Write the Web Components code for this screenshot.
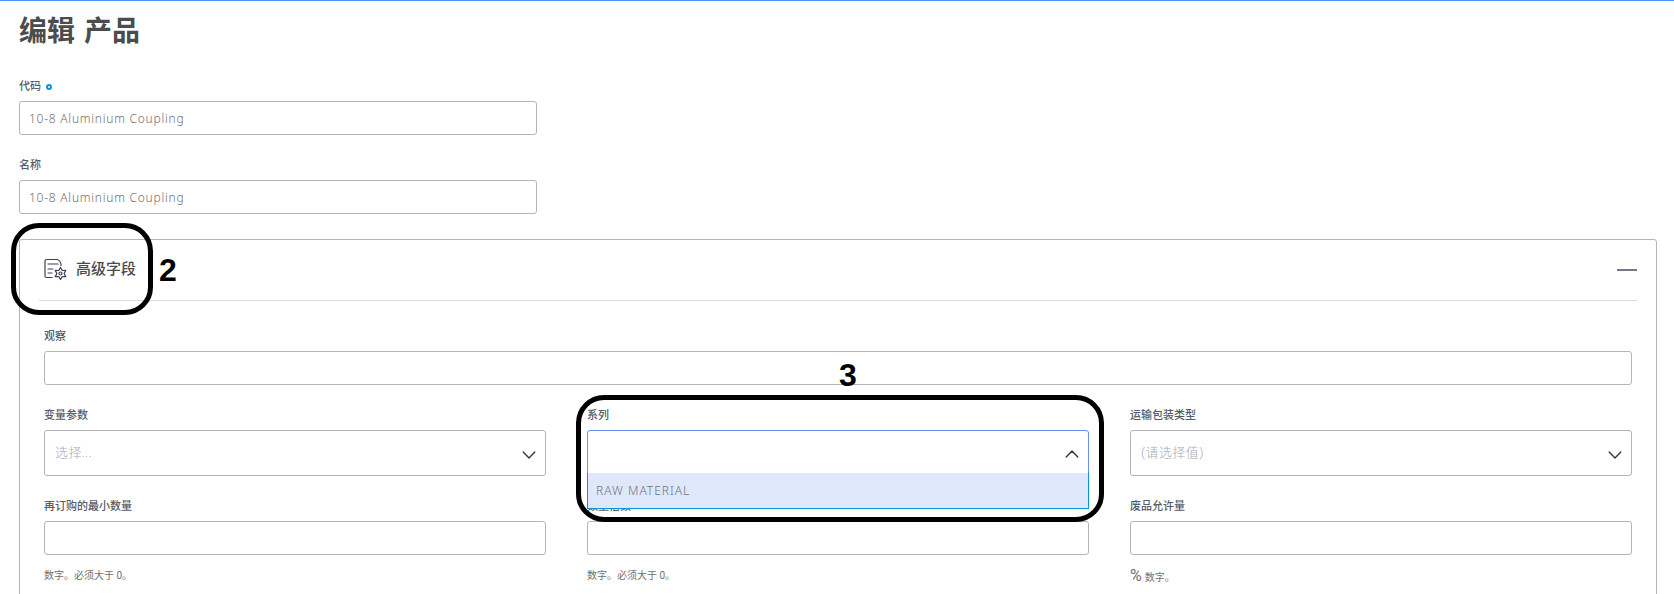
<!DOCTYPE html>
<html lang="zh-CN">
<head>
<meta charset="utf-8">
<title>编辑 产品</title>
<style>
html,body{margin:0;height:594px;overflow:hidden;background:#fff}
body{font-family:Roboto,"Noto Sans CJK SC",sans-serif;color:#4a4a4a}
</style>
</head>
<body>
<product-page></product-page>
<script>
const define = (name, html, setup) => customElements.define(name, class extends HTMLElement {
  constructor(){
    super();
    const t = document.createElement('template');
    t.innerHTML = html;
    this.attachShadow({mode:'open'}).append(t.content.cloneNode(true));
  }
  connectedCallback(){ if (setup) setup(this, this.shadowRoot); }
});

define('form-field', `
<style>
:host{display:block;min-width:0}
.label{display:flex;align-items:center;height:22px;line-height:22px;padding-top:1px;margin-bottom:3px;font-size:11px;font-weight:500;color:#555b68;white-space:nowrap}
.dot{display:none;box-sizing:border-box;width:6px;height:6px;border:2px solid #0a96d6;border-radius:50%;margin:-1px 0 0 5px}
:host([required]) .dot{display:block}
.hint{display:none;height:20px;margin-top:11px;line-height:20px;font-size:10px;color:#707070;white-space:nowrap}
:host([hint]) .hint{display:block}
.unit{font-size:16px;margin-right:3px}
.unit:empty{display:none}
</style>
<div class="label"><span class="t"></span><span class="dot"></span></div>
<slot></slot>
<div class="hint"><span class="unit"></span><span class="h"></span></div>`,
(el, r) => {
  r.querySelector('.t').textContent = el.getAttribute('label');
  r.querySelector('.unit').textContent = el.getAttribute('unit') || '';
  r.querySelector('.h').textContent = el.getAttribute('hint') || '';
});

define('text-box', `
<style>
:host{display:flex;align-items:center;box-sizing:border-box;height:34px;border:1px solid #b4b4bd;border-radius:3px;padding:0 10px 0 9px;background:#fff;font-family:"Noto Sans",sans-serif;font-weight:300;font-size:12px;letter-spacing:.75px;color:#707070;white-space:nowrap}
</style><slot></slot>`);

define('select-box', `
<style>
:host{display:block;position:relative}
.box{display:flex;align-items:center;justify-content:space-between;box-sizing:border-box;height:46px;border:1px solid #b4b4bd;border-radius:3px;padding:0 9px 0 10px;background:#fff;font-size:13px;font-weight:300;letter-spacing:.4px;color:#a9abb8}
.value{margin-top:-4px;white-space:nowrap}
svg{display:block;width:14px;height:14px;margin-top:3px}
:host([open]) svg{transform:rotate(180deg);margin-top:2px}
:host([open]) .box{border-color:#6b90f2}
::slotted(option-list){position:absolute;left:0;right:0;top:43px;z-index:2}
</style>
<div class="box"><span class="value"></span>
<svg viewBox="0 0 14 14" fill="none" stroke="#34384b" stroke-width="1.4" stroke-linecap="round" stroke-linejoin="round"><path d="M1.2 4 7 10l5.800-6"/></svg></div>
<slot></slot>`,
(el, r) => { r.querySelector('.value').textContent = el.getAttribute('placeholder') || ''; });

define('option-list', `
<style>
:host{display:flex;align-items:center;box-sizing:border-box;height:36px;padding:0 8px;border:solid #0b97d4;border-width:0 1px 1px;background:#dfe8fb;font-family:"Noto Sans",sans-serif;font-weight:300;font-size:12px;letter-spacing:1px;color:#6d717b}
</style><slot></slot>`);

define('advanced-panel', `
<style>
:host{display:block;box-sizing:border-box;width:1638px;height:380px;border:1px solid #b4b4bd;border-radius:3px;padding:0 19px}
header{display:flex;align-items:center;box-sizing:border-box;height:61px;padding-left:5px;border-bottom:1px solid #dcdce0}
svg{width:24px;height:24px;margin-right:8px}
h2{flex:1;margin:-2px 0 0;font-size:15px;line-height:22px;font-weight:500;color:#4a4a4a}
.minus{width:20px;height:2px;background:#747785}
.body{display:grid;grid-template-columns:repeat(3,502px);column-gap:41px;row-gap:19px;padding:24px 5px 0}
</style>
<header>
<svg viewBox="0 0 24 24" fill="none" stroke="#3c4052" stroke-width="1.200" stroke-linecap="round" stroke-linejoin="round">
<path d="M8 19.500H2.500Q1 19.500 1 18V3Q1 1.500 2.500 1.500h10.500q3.500 1 4 5v1M4 6h10M4 11h5M4 15h4"/>
<path d="m16.500 9.500 1.800 3 3.500-.1-1.700 3.100 1.700 3.100-3.500-.1-1.800 3-1.800-3-3.500.1 1.700-3.100-1.700-3.100 3.500.1Z"/><circle cx="16.500" cy="15.500" r="1.500"/>
</svg>
<h2>高级字段</h2><div class="minus"></div></header>
<div class="body"><slot></slot></div>`);

define('call-out', `
<style>
:host{display:block;position:absolute;box-sizing:border-box;border:5px solid #000;border-radius:28px;z-index:5}
.n{position:absolute;font:bold 32px/32px "Liberation Sans",Arial,sans-serif;color:#000}
</style><div class="n"><slot></slot></div>`,
(el, r) => {
  const [x, y, w, h, nx, ny] = el.getAttribute('box').split(' ').map(Number);
  Object.assign(el.style, {left:x+'px', top:y+'px', width:w+'px', height:h+'px'});
  Object.assign(r.querySelector('.n').style, {left:nx+'px', top:ny+'px'});
});

define('product-page', `
<style>
:host{display:block;position:relative;box-sizing:border-box;height:594px;overflow:hidden;border-top:1px solid #4d8ffb;padding:0 17px 0 19px}
h1{margin:0;height:74px;padding-top:10px;box-sizing:border-box;font-size:28px;line-height:42px;font-weight:700;color:#4c4c4c;word-spacing:2px}
.top{display:grid;width:518px;row-gap:19px;margin-bottom:25px}
.wide{grid-column:1/-1;width:1588px}
</style>
<h1>编辑 产品</h1>
<div class="top">
<form-field label="代码" required><text-box>10-8 Aluminium Coupling</text-box></form-field>
<form-field label="名称"><text-box>10-8 Aluminium Coupling</text-box></form-field>
</div>
<advanced-panel>
<form-field class="wide" label="观察"><text-box></text-box></form-field>
<form-field label="变量参数"><select-box placeholder="选择..."></select-box></form-field>
<form-field label="系列"><select-box open><option-list>RAW MATERIAL</option-list></select-box></form-field>
<form-field label="运输包装类型"><select-box placeholder="(请选择值)"></select-box></form-field>
<form-field label="再订购的最小数量" hint="数字。必须大于 0。"><text-box></text-box></form-field>
<form-field label="数量倍数" hint="数字。必须大于 0。"><text-box></text-box></form-field>
<form-field label="废品允许量" unit="%" hint="数字。"><text-box></text-box></form-field>
</advanced-panel>
<call-out box="11 222 142 92 143 26">2</call-out>
<call-out box="576 394 528 127 258 -41">3</call-out>`);
</script>
</body>
</html>
